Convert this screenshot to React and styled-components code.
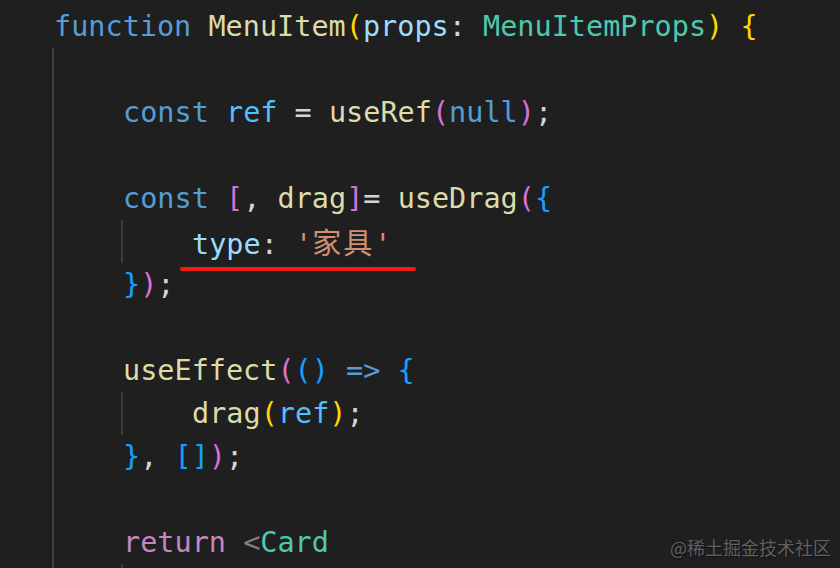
import React from "react";
import styled, { createGlobalStyle } from "styled-components";

const colors = {
  keyword: "#569cd6",
  fn: "#dcdcaa",
  param: "#9cdcfe",
  constant: "#4fc1ff",
  type: "#4ec9b0",
  string: "#ce9178",
  control: "#c586c0",
  punct: "#d4d4d4",
  tag: "#808080",
  gold: "#ffd700",
  orchid: "#da70d6",
  sky: "#179fff",
};

const GlobalStyle = createGlobalStyle`
  html, body {
    margin: 0;
    padding: 0;
    height: 100%;
    overflow: hidden;
    background: #1f1f1f;
  }
`;

const Editor = styled.div`
  position: relative;
  width: 840px;
  height: 568px;
  overflow: hidden;
  box-sizing: border-box;
  padding: 5px 0 0 54px;
  background: #1f1f1f;
  font-family: "DejaVu Sans Mono", "Liberation Mono", monospace;
  font-size: 28.5px;
  color: ${colors.punct};
`;

const Line = styled.div`
  height: 43px;
  line-height: 43px;
  white-space: pre;
`;

// indent guide: a left border on the nested block
const Block = styled.div`
  margin-left: -2px;
  padding-left: 69px;
  border-left: 2px solid ${(p) => (p.$outer ? "#3f3f3f" : "#3a3a3a")};
`;

const Tok = styled.span`
  color: ${(p) => colors[p.$c] || colors.punct};
`;

const Cjk = styled.span`
  font-family: "Noto Sans CJK SC", sans-serif;
  font-size: 29px;
  letter-spacing: 2px;
`;

const Underline = styled.div`
  position: absolute;
  left: 180px;
  top: 267px;
  width: 236px;
  height: 4px;
  border-radius: 2px;
  background: #f5190f;
`;

const Watermark = styled.div`
  position: absolute;
  right: 9px;
  bottom: 8px;
  font-family: "Noto Sans CJK SC", "Noto Sans", sans-serif;
  font-size: 18px;
  color: #606060;
  text-shadow: 1px 1px 1px #111;
`;

export default function App() {
  return (
    <>
      <GlobalStyle />
      <Editor>
        <Line>
          <Tok $c="keyword">function</Tok> <Tok $c="fn">MenuItem</Tok>
          <Tok $c="gold">(</Tok>
          <Tok $c="param">props</Tok>: <Tok $c="type">MenuItemProps</Tok>
          <Tok $c="gold">)</Tok> <Tok $c="gold">{"{"}</Tok>
        </Line>
        <Block $outer>
          <Line> </Line>
          <Line>
            <Tok $c="keyword">const</Tok> <Tok $c="constant">ref</Tok> ={" "}
            <Tok $c="fn">useRef</Tok>
            <Tok $c="orchid">(</Tok>
            <Tok $c="keyword">null</Tok>
            <Tok $c="orchid">)</Tok>;
          </Line>
          <Line> </Line>
          <Line>
            <Tok $c="keyword">const</Tok> <Tok $c="orchid">[</Tok>,{" "}
            <Tok $c="fn">drag</Tok>
            <Tok $c="orchid">]</Tok>= <Tok $c="fn">useDrag</Tok>
            <Tok $c="orchid">(</Tok>
            <Tok $c="sky">{"{"}</Tok>
          </Line>
          <Block>
            <Line>
              <Tok $c="param">type</Tok>:{" "}
              <Tok $c="string">
                '<Cjk>家具</Cjk>'
              </Tok>
            </Line>
          </Block>
          <Line>
            <Tok $c="sky">{"}"}</Tok>
            <Tok $c="orchid">)</Tok>;
          </Line>
          <Line> </Line>
          <Line>
            <Tok $c="fn">useEffect</Tok>
            <Tok $c="orchid">(</Tok>
            <Tok $c="sky">()</Tok> <Tok $c="keyword">=&gt;</Tok>{" "}
            <Tok $c="sky">{"{"}</Tok>
          </Line>
          <Block>
            <Line>
              <Tok $c="fn">drag</Tok>
              <Tok $c="gold">(</Tok>
              <Tok $c="constant">ref</Tok>
              <Tok $c="gold">)</Tok>;
            </Line>
          </Block>
          <Line>
            <Tok $c="sky">{"}"}</Tok>, <Tok $c="sky">[]</Tok>
            <Tok $c="orchid">)</Tok>;
          </Line>
          <Line> </Line>
          <Line>
            <Tok $c="control">return</Tok> <Tok $c="tag">&lt;</Tok>
            <Tok $c="type">Card</Tok>
          </Line>
          <Block>
            <Line> </Line>
          </Block>
        </Block>
        <Underline />
        <Watermark>@稀土掘金技术社区</Watermark>
      </Editor>
    </>
  );
}
